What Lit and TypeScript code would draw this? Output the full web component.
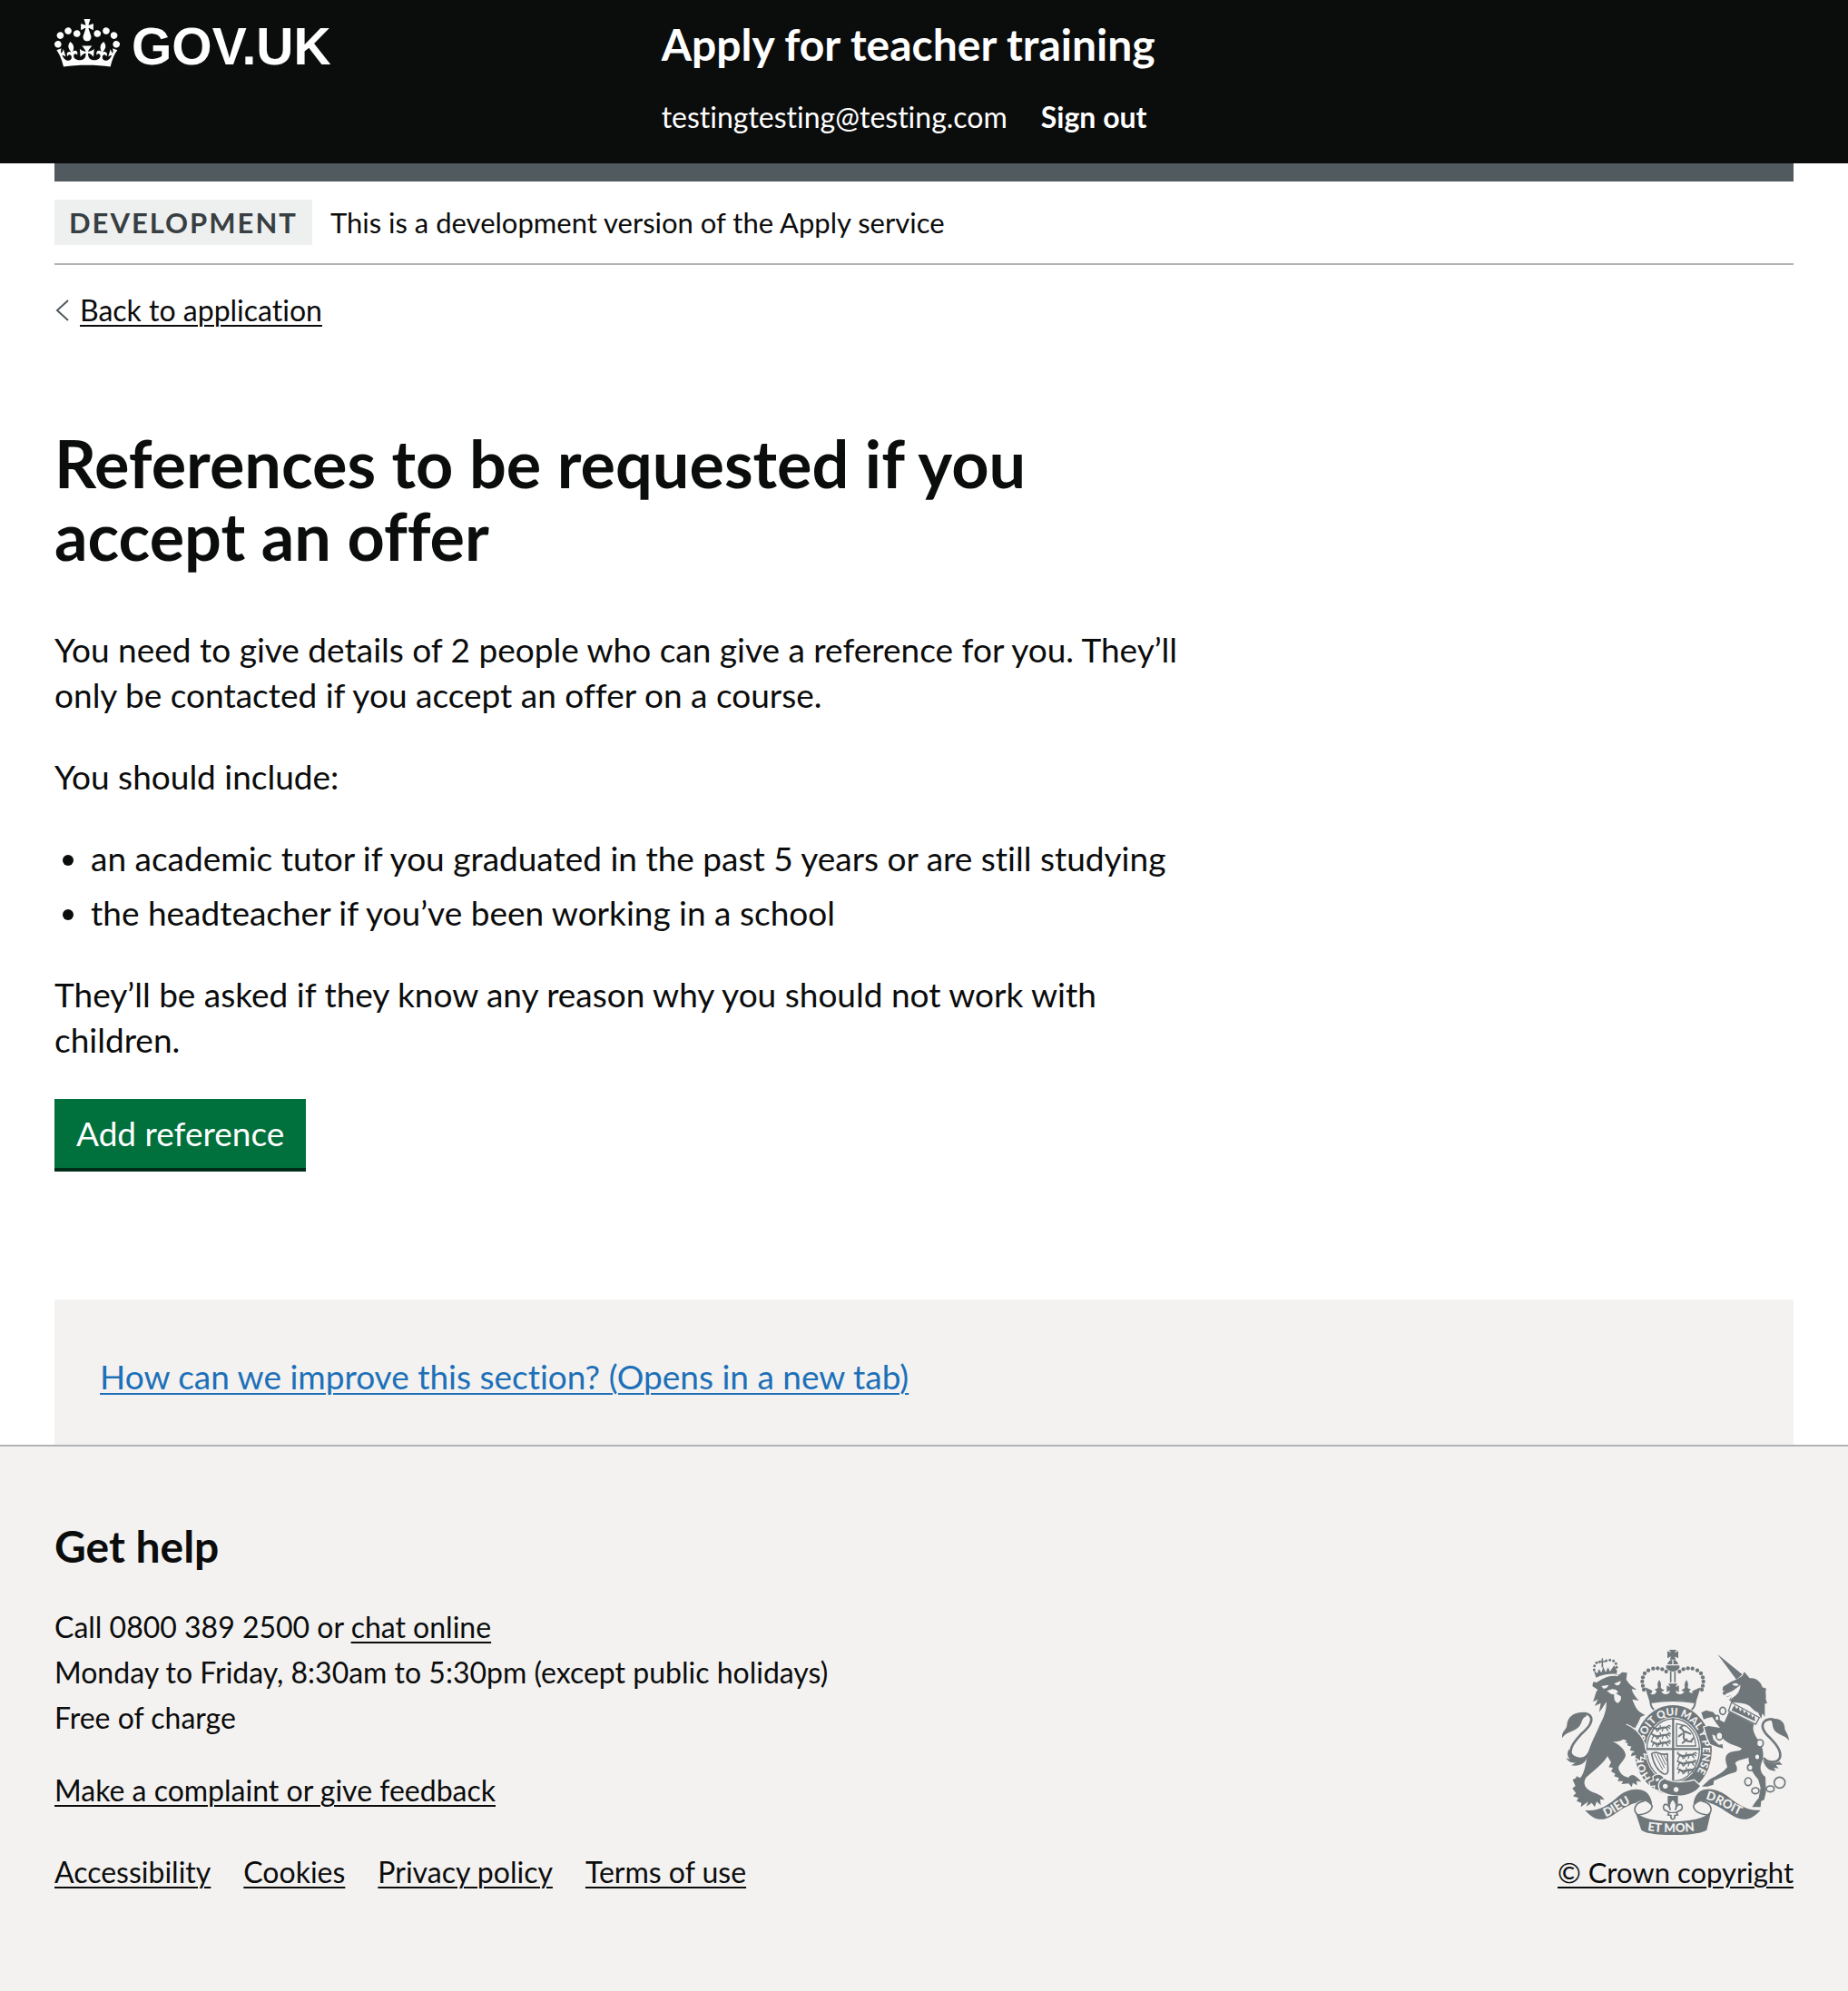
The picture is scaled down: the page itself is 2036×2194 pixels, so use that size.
import { LitElement, html, svg, css } from "lit";
import { customElement } from "lit/decorators.js";

const range = (n: number) => Array.from({ length: n }, (_, i) => i);

@customElement("govuk-crown")
class GovukCrown extends LitElement {
  static styles = css`
    :host { display: block; }
    svg { display: block; width: 72px; height: 53px; fill: currentColor; }
  `;

  render() {
    return html`
      <svg viewBox="0 0 132 97" aria-hidden="true">
        <path fill-rule="evenodd" d="M25 30.2c3.5 1.5 7.7-.2 9.1-3.7 1.5-3.6-.2-7.8-3.9-9.2-3.6-1.4-7.6.3-9.1 3.9-1.4 3.5.3 7.5 3.9 9zM9 39.5c3.6 1.5 7.8-.2 9.2-3.7 1.5-3.6-.2-7.8-3.9-9.1-3.6-1.5-7.6.2-9.1 3.8-1.4 3.5.3 7.5 3.8 9zM4.4 57.2c3.5 1.5 7.7-.2 9.1-3.8 1.5-3.6-.2-7.7-3.9-9.1-3.5-1.5-7.6.3-9.1 3.8-1.4 3.5.3 7.6 3.9 9.1zm38.3-21.4c3.5 1.5 7.7-.2 9.1-3.8 1.5-3.6-.2-7.7-3.9-9.1-3.6-1.5-7.6.3-9.1 3.8-1.3 3.6.4 7.7 3.9 9.1zm64.4-5.6c-3.6 1.5-7.8-.2-9.1-3.7-1.5-3.6.2-7.8 3.8-9.2 3.6-1.4 7.7.3 9.2 3.9 1.3 3.5-.4 7.5-3.9 9zm15.9 9.3c-3.6 1.5-7.7-.2-9.1-3.7-1.5-3.6.2-7.8 3.7-9.1 3.6-1.5 7.7.2 9.2 3.8 1.5 3.5-.3 7.5-3.8 9zm4.7 17.7c-3.6 1.5-7.8-.2-9.2-3.8-1.5-3.6.2-7.7 3.9-9.1 3.6-1.5 7.7.3 9.2 3.8 1.3 3.5-.4 7.6-3.9 9.1zM89.3 35.8c-3.6 1.5-7.8-.2-9.2-3.8-1.4-3.6.2-7.7 3.9-9.1 3.6-1.5 7.7.3 9.2 3.8 1.4 3.6-.3 7.7-3.9 9.1zM69.7 17.7l8.9 4.7V9.3l-8.9 2.8c-.2-.3-.5-.6-.9-.9L72.4 0H59.6l3.5 11.2c-.3.3-.6.5-.9.9l-8.8-2.8v13.1l8.8-4.7c.3.3.6.7.9.9l-5 15.4v.1c-.2.8-.4 1.6-.4 2.4 0 4.1 3.1 7.5 7 8.1h.2c.3 0 .7.1 1 .1.4 0 .7 0 1-.1h.2c4-.6 7.1-4.1 7.1-8.1 0-.8-.1-1.7-.4-2.4V34l-5.1-15.4c.4-.2.7-.6 1-.9zM66 92.8c16.9 0 32.8 1.1 47.1 3.2 4-16.9 8.9-26.7 14-33.5l-9.6-3.4c1 4.9 1.1 7.2 0 10.2-1.5-1.4-3-4.3-4.2-8.7L108.6 76c2.8-2 5-3.2 7.5-3.3-4.4 9.4-10 11.9-13.6 11.2-4.3-.8-6.3-4.6-5.6-7.9 1-4.7 5.7-5.9 8-.5 4.3-8.7-3-11.4-7.6-8.8 7.1-7.2 7.9-13.5 2.1-21.1-8 6.1-8.1 12.3-4.5 20.8-4.7-5.4-12.1-2.5-9.5 6.2 3.4-5.2 7.9-2 7.2 3.1-.6 4.3-6.4 7.8-13.5 7.2-10.3-.9-10.9-8-11.2-13.8 2.5-.5 7.1 1.8 11 7.3L80.2 60c-4.1 4.4-8 5.3-12.3 5.4 1.4-4.4 8-11.6 8-11.6H55.5s6.4 7.2 7.9 11.6c-4.2-.1-8-1-12.3-5.4l1.4 16.4c3.9-5.5 8.5-7.7 10.9-7.3-.3 5.8-.9 12.8-11.1 13.8-7.2.6-12.9-2.9-13.5-7.2-.7-5 3.8-8.3 7.1-3.1 2.7-8.7-4.6-11.6-9.4-6.2 3.7-8.5 3.6-14.7-4.6-20.8-5.8 7.6-5 13.9 2.2 21.1-4.7-2.6-11.9.1-7.7 8.8 2.3-5.5 7.1-4.2 8.1.5.7 3.3-1.3 7.1-5.7 7.9-3.5.7-9-1.8-13.5-11.2 2.5.1 4.7 1.3 7.5 3.3l-4.7-15.4c-1.2 4.4-2.7 7.2-4.3 8.7-1.1-3-.9-5.3 0-10.2l-9.5 3.4c5 6.9 9.9 16.7 14 33.5 14.8-2.1 30.8-3.2 47.7-3.2z"/>
      </svg>
    `;
  }
}

@customElement("royal-arms")
class RoyalArms extends LitElement {
  static styles = css`
    :host { display: block; color: #6f777b; --paper: #f3f2f1; }
    svg { display: block; width: 250px; height: 204px; }
    .ink { fill: currentColor; }
    .paper { fill: var(--paper); }
    .line { fill: none; stroke: currentColor; stroke-linejoin: round; stroke-linecap: round; }
    .gap { fill: none; stroke: var(--paper); stroke-linejoin: round; }
    .halo { stroke: var(--paper); stroke-width: 8px; paint-order: stroke; }
    text { fill: var(--paper); font-family: Lato, sans-serif; font-weight: 900; }
    .motto { font-size: 40px; }
    .garter { font-size: 35px; }
  `;

  private beads() {
    const left = [[330, 192], [327, 179], [325, 165], [327, 151], [333, 138], [345, 128], [361, 122], [376, 121], [391, 124], [404, 132]];
    return left.map(([x, y]) => svg`
      <circle class="ink" cx=${x} cy=${y} r="6.5"/>
      <circle class="ink" cx=${852 - x} cy=${y} r="6.5"/>`);
  }

  private passant(x: number, y: number) {
    return svg`<g transform="translate(${x} ${y})">
      <path class="line" stroke-width="7" d="M10 9q12 7 22 3t22-3"/>
      <path class="line" stroke-width="4" d="M12 10l-6 10M18 12l4 10M42 11l-3 10M50 9l8 10M54 8q8-10 12-3M12 8q-14 0-6-8M28 10l-2 10M58 6l6 6M34 10l-2-8"/>
    </g>`;
  }

  render() {
    return html`
      <svg viewBox="60 60 750 612" role="img" aria-label="Royal coat of arms">
        <!-- lion's tail -->
        <path class="line" stroke-width="8" d="M152 395C140 425 100 432 90 410C82 385 102 362 122 340C150 315 160 300 156 284C150 268 130 268 116 274"/>
        <path class="ink" d="M140 268C105 262 78 278 76 308C76 325 58 326 60 352C74 330 92 334 112 318C128 306 122 286 140 280z"/>
        <path class="ink" d="M84 388C74 402 78 414 86 422L74 418C80 430 90 434 104 434L90 442C112 446 128 440 138 426L146 412C124 420 96 420 84 388z"/>

        <!-- lion -->
        <path class="ink" d="M160 180L163 166L174 168C200 150 228 142 250 142L258 134L275 136L272 158C280 172 292 182 307 192L290 190C294 206 302 216 314 228L292 224C300 242 304 256 318 266L334 276L320 282L312 300L300 322C318 340 336 366 334 392L342 406L328 404L332 420L316 414L318 426L302 416L304 408L288 412L290 402L300 396L284 392L294 382L276 376L280 370L268 366L274 360L262 356C252 362 240 364 228 364C250 374 268 390 270 408C268 424 250 436 246 450C250 468 262 480 280 482C284 474 292 472 300 476L310 484L322 496L306 494L308 508L294 500L290 514L280 502L256 504L262 494L244 494L248 484L232 478L236 470L222 462L228 450L214 448L222 432L210 412L214 402C204 430 174 452 146 476C132 486 130 504 140 516C150 530 172 532 190 544L200 556L186 554L188 574L174 562L168 580L158 566L140 578L146 562L122 580L124 566L108 560L114 550L96 544L106 534L94 518L104 510L95 490L106 484L108 478L120 484C138 462 138 428 146 402C154 370 172 340 184 310C196 286 208 262 206 232L192 254L182 266L188 236L168 246L178 224L162 232C170 212 170 200 178 192z"/>
        <path class="paper" d="M190 180L214 176Q208 190 196 188zM232 172L254 163Q254 178 240 178zM208 196L226 190L238 192L246 200L238 204L254 214Q258 228 244 236Q230 232 232 208L222 206z"/>
        <!-- lion's crown -->
        <path class="ink" d="M172 152L165 128L176 138L182 124L190 136L196 116L204 134L212 118L218 132L232 112L242 130L240 140C216 138 194 142 172 152z"/>
        <path class="line" stroke-width="5" d="M193 90V116M184 99H202"/>
        ${[[166, 126], [167, 113], [174, 103], [184, 100], [206, 96], [218, 94], [230, 97], [238, 106], [240, 118]].map(([x, y]) => svg`<circle class="ink" cx=${x} cy=${y} r="4.5"/>`)}
        <path class="gap" stroke-width="4" d="M168 158C194 148 220 143 246 145"/>

        <!-- imperial crown -->
        <path class="ink" d="M414 60H438L432 70L444 64V88L432 82L436 92H416L420 82L408 88V64L420 70z"/>
        <path class="ink" d="M408 108C410 98 418 93 424 93V108zM444 108C442 98 434 93 428 93V108zM404 112h44v8Q438 132 426 132Q414 132 404 120z"/>
        ${this.beads()}
        <path class="line" stroke-width="5" d="M419 134V166M433 134V166"/>
        <path class="ink" d="M411 172L441 172L435 184L446 178V200L435 194L440 208H412L417 194L406 200V178L417 184z"/>
        <path class="ink" d="M334 184L352 192C364 196 356 206 350 204C362 212 372 206 372 196Q364 192 368 190Q376 190 377 184Q372 172 381 160Q390 172 386 184Q388 192 396 192Q400 196 388 198Q394 210 406 206L426 200L446 206Q458 210 464 198Q452 196 456 192Q464 192 466 184Q462 172 471 160Q480 172 475 184Q476 190 484 190Q488 192 480 196Q480 206 502 204Q496 206 490 202Q488 196 500 192L518 184L502 234C470 224 382 224 350 234z"/>
        <path class="line" stroke-width="6" d="M352 234Q426 222 500 234Q498 250 490 256M352 234Q354 250 362 256"/>

        <!-- garter and shield -->
        <ellipse class="ink" cx="427" cy="391" rx="128" ry="148"/>
        <ellipse class="paper" cx="427" cy="391" rx="92" ry="108"/>
        <ellipse class="line" stroke-width="4" cx="427" cy="391" rx="87" ry="103"/>
        <path class="line" stroke-width="7" d="M427 288V494M340 388H514"/>
        ${range(3).map((i) => this.passant(352, 308 + i * 25))}
        ${range(3).map((i) => this.passant(438, 398 + i * 25))}
        <path class="line" stroke-width="4" d="M438 304V378H502Q498 330 470 312z"/>
        <path class="line" stroke-width="6" d="M450 318Q466 326 462 344T488 364M456 338L446 346M466 330L484 338M472 356L458 368M486 362L494 352M450 318L458 312"/>
        <path class="line" stroke-width="5" d="M356 404Q366 396 380 402T408 404L410 462Q406 474 396 470Q366 456 356 404"/>
        <path class="line" stroke-width="3" d="M366 406L392 456M376 406L398 450M386 406L402 440M396 408L406 428"/>
        <path id="garter-line" fill="none" d="M354 484A98 114 0 0 1 329 391A98 114 0 0 1 525 391A98 114 0 0 1 476 494"/>
        <text class="garter"><textPath href="#garter-line">HONI <tspan dx="26">SOIT QUI MAL Y PENSE</tspan></textPath></text>
        <!-- buckle -->
        <path class="ink halo" d="M362 480C374 468 392 474 396 486C428 504 468 500 496 492L516 510C496 540 440 552 398 532L384 526L366 520L368 508L352 510L350 498L364 492z"/>
        <path class="gap" stroke-width="4" d="M396 486Q384 490 380 502T384 526"/>
        <circle class="paper" cx="401" cy="511" r="8"/>
        <circle class="paper" cx="437" cy="522" r="8"/>
        <path class="paper" d="M368 488l10-4 4 6-10 6z"/>
        <!-- paw over the garter -->
        <path class="ink halo" d="M300 324C318 342 334 362 334 388L342 404L328 402L332 418L318 412L318 426L302 416L304 408L288 412L290 402L300 396L284 392L290 378z"/>
        <path class="ink" d="M270 300L302 324L300 392L284 392L294 382L276 376L280 350z"/>
        <path class="gap" stroke-width="4" d="M272 306Q288 312 302 324"/>

        <!-- unicorn -->
        <path class="ink" d="M574 75L656 142L636 158z"/>
        <path class="ink" d="M656 146L662 133L680 154C704 150 720 172 722 184L735 188C730 200 736 212 733 222L738 238L730 238L730 282L722 270L718 288L708 268L696 262L680 246C664 234 640 236 622 234L612 226L634 196L626 198L616 212L604 216L612 204L594 210L590 200L598 196L590 194L592 182L618 166L636 158z"/>
        <path class="paper" d="M622 174Q636 166 644 176Q634 184 622 174zM600 206L624 196L650 176Q648 204 624 218L616 226L622 210L606 214z"/>
        <path class="ink halo" d="M612 264L694 306C688 322 694 338 708 358C724 380 730 410 720 432C712 450 716 468 732 480L734 530L728 556L718 560L716 580H688L700 562L710 550L716 516L708 488C690 470 676 440 676 416C656 424 636 424 632 436C640 448 640 460 634 464C606 470 580 486 562 492L560 506L540 512H522L546 490C574 474 592 466 606 448C602 430 594 414 610 402C628 390 650 398 654 386C634 376 606 372 590 352L588 340L566 344L556 340L560 356L578 374L590 372L592 386L576 382L550 372L540 350L530 316L544 312L582 318L572 306L556 282L540 286L528 290L520 268L536 260L560 266L578 290L596 300z"/>
        <path class="paper" stroke="currentColor" stroke-width="4" d="M620 234L712 284L700 306L610 262z"/>
        <path class="ink" d="M622 256L630 242L636 256L644 248L648 264L656 254L662 270L670 262L676 278L684 270L688 284L696 276L698 296L620 260z"/>
        <!-- unicorn's tail -->
        <path class="line" stroke-width="8" d="M728 420C744 436 772 434 780 416C786 396 768 372 748 352C720 328 716 306 732 294C746 286 758 288 768 296"/>
        <path class="ink" d="M746 288C782 284 796 300 796 320C798 332 808 336 810 360C796 340 776 344 762 326C752 312 760 300 746 288zM724 424C730 448 744 462 766 460L760 450L776 452L766 440L788 440L778 430C756 440 742 436 724 424z"/>
        <!-- chain -->
        ${[[591, 262, 10, 12], [572, 286, 7, 9], [580, 345, 11, 13], [714, 369, 11, 12], [705, 414, 9, 10], [682, 449, 9, 10], [675, 496, 11, 13], [699, 526, 12, 10], [748, 520, 13, 10], [779, 499, 18, 18]].map(
          ([x, y, rx, ry]) => svg`<ellipse class="paper" stroke="currentColor" stroke-width="5" cx=${x} cy=${y} rx=${rx} ry=${ry}/>`,
        )}

        <!-- ribbon -->
        <path class="ink" d="M136 590C180 596 214 574 244 546C270 522 308 514 334 528C352 540 358 560 358 580C344 558 322 552 304 566C278 572 252 590 226 608C192 630 162 622 136 590z"/>
        <path class="ink" d="M716 590C676 594 646 574 614 550C584 524 544 512 516 528C500 540 494 558 494 578C510 558 530 554 548 566C576 574 600 594 626 610C660 630 690 620 716 590z"/>
        <path class="line" stroke-width="5" d="M330 560C300 566 292 590 310 606C330 604 356 596 358 576M522 560C552 566 562 590 542 606C522 604 496 596 494 576"/>
        <path class="ink" d="M302 596C340 638 512 638 552 596L538 656C504 678 348 678 322 656z"/>
        <path id="motto-left" fill="none" d="M204 613C244 598 264 572 320 552"/>
        <path id="motto-right" fill="none" d="M534 554C576 562 608 594 680 620"/>
        <path id="motto-centre" fill="none" d="M342 658Q426 670 530 655"/>
        <text class="motto"><textPath href="#motto-left">DIEU</textPath></text>
        <text class="motto"><textPath href="#motto-centre">ET MON</textPath></text>
        <text class="motto"><textPath href="#motto-right">DROIT</textPath></text>

        <!-- fleur-de-lis -->
        <path class="ink" d="M409 543H443V572H409z"/>
        <path class="paper" stroke="currentColor" stroke-width="5" d="M426 552Q444 572 434 590Q440 568 454 572Q464 588 444 594L438 598L442 606L432 608Q434 620 426 620Q418 620 420 608L410 606L414 598L408 594Q388 588 398 572Q412 568 418 590Q408 572 426 552z"/>
        <path class="line" stroke-width="4" d="M412 598H440"/>
      </svg>
    `;
  }
}

@customElement("app-root")
class AppRoot extends LitElement {
  static styles = css`
    :host {
      display: block;
      min-height: 100vh;
      background: #f3f2f1;
      color: #0b0c0c;
      font-family: Lato, "Liberation Sans", sans-serif;
      font-size: 37px;
      line-height: 50px;
      font-variant-ligatures: none;
    }
    a { color: inherit; text-decoration-thickness: 2px; text-underline-offset: 4px; }
    h1, h2, p, ul { margin: 0; padding: 0; }
    ul { list-style: none; }
    .width { margin: 0 60px; }

    .header { background: #0b0c0c; color: #fff; }
    .header-row { display: grid; grid-template-columns: 1fr 2fr; min-height: 180px; }
    .header a { text-decoration: none; }
    .logo { display: flex; align-items: flex-start; gap: 13px; padding-top: 21px; }
    .logo-text { font: 700 57px/60px "Liberation Sans", sans-serif; }
    .header-content { padding: 19px 0 0 30px; display: flex; flex-direction: column; gap: 30px; }
    .service { font-size: 48px; line-height: 60px; font-weight: 700; }
    .account { display: flex; gap: 37px; font-size: 32px; line-height: 40px; }
    .account .sign-out { font-weight: 700; }

    .page { background: #fff; overflow: hidden; }
    .rule { height: 20px; background: #505a5f; }
    .phase { display: flex; align-items: center; gap: 20px; padding: 20px 0; border-bottom: 2px solid #b1b4b6; font-size: 31px; }
    .tag { padding: 0 16px; background: #eeefef; color: #383f43; font-weight: 700; letter-spacing: 2px; }
    .back { display: flex; align-items: center; gap: 12px; width: max-content; margin-top: 30px; font-size: 32px; line-height: 40px; text-decoration: none; }
    .back span { text-decoration: underline 2px; text-underline-offset: 4px; }
    .back svg { width: 16px; height: 26px; fill: none; stroke: #505a5f; stroke-width: 2; }

    .main { width: 66%; padding: 108px 0 145px; }
    h1 { margin-bottom: 61px; font-size: 72px; line-height: 80px; font-weight: 700; }
    .main p, .list { margin-bottom: 40px; }
    .list { display: grid; gap: 10px; padding-left: 40px; list-style: disc; }
    .button {
      display: block; padding: 13px 24px; border: 0; border-radius: 0;
      background: #00703c; box-shadow: 0 4px 0 #002d18; color: #fff; font: inherit;
    }
    .feedback { padding: 60px 50px 50px; background: #f3f2f1; color: #1d70b8; }

    .footer { border-top: 2px solid #b1b4b6; font-size: 32px; }
    .footer-row { display: flex; justify-content: space-between; align-items: flex-end; padding-top: 80px; }
    h2 { margin-bottom: 34px; font-size: 48px; line-height: 60px; }
    .help p { margin-bottom: 30px; }
    .links { display: flex; gap: 36px; padding-top: 10px; }
    .copyright { display: flex; flex-direction: column; align-items: center; gap: 16px; font-size: 31px; }
  `;

  private links = ["Accessibility", "Cookies", "Privacy policy", "Terms of use"];

  render() {
    return html`
      <header class="header">
        <div class="header-row width">
          <a class="logo" href="#"><govuk-crown></govuk-crown><span class="logo-text">GOV.UK</span></a>
          <div class="header-content">
            <a class="service" href="#">Apply for teacher training</a>
            <div class="account"><span>testingtesting@testing.com</span><a class="sign-out" href="#">Sign out</a></div>
          </div>
        </div>
      </header>

      <div class="page">
        <div class="width">
          <div class="rule"></div>
          <div class="phase"><strong class="tag">DEVELOPMENT</strong><span>This is a development version of the Apply service</span></div>
          <a class="back" href="#"><svg viewBox="0 0 16 26" aria-hidden="true"><path d="M15 2L3 13L15 24"/></svg><span>Back to application</span></a>
          <main class="main">
            <h1>References to be requested if you accept an offer</h1>
            <p>You need to give details of 2 people who can give a reference for you. They’ll only be contacted if you accept an offer on a course.</p>
            <p>You should include:</p>
            <ul class="list">
              <li>an academic tutor if you graduated in the past 5 years or are still studying</li>
              <li>the headteacher if you’ve been working in a school</li>
            </ul>
            <p>They’ll be asked if they know any reason why you should not work with children.</p>
            <button class="button" type="button">Add reference</button>
          </main>
          <div class="feedback"><a href="#">How can we improve this section? (Opens in a new tab)</a></div>
        </div>
      </div>

      <footer class="footer">
        <div class="footer-row width">
          <div class="help">
            <h2>Get help</h2>
            <p>Call 0800 389 2500 or <a href="#">chat online</a><br>Monday to Friday, 8:30am to 5:30pm (except public holidays)<br>Free of charge</p>
            <p><a href="#">Make a complaint or give feedback</a></p>
            <ul class="links">${this.links.map((l) => html`<li><a href="#">${l}</a></li>`)}</ul>
          </div>
          <div class="copyright"><royal-arms></royal-arms><a href="#">© Crown copyright</a></div>
        </div>
      </footer>
    `;
  }
}
